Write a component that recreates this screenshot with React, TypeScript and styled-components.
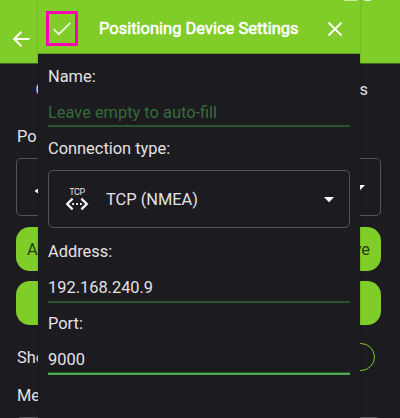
import React from "react";
import styled, { createGlobalStyle } from "styled-components";

const Global = createGlobalStyle`
  * { box-sizing: border-box; }
  html, body { margin: 0; background: #1c1b20; }
  body { font-family: Roboto, sans-serif; font-size: 16.4px; color: #e4e2e5; overflow: hidden; }
`;

const Screen = styled.div`
  position: relative;
  width: 400px;
  height: 418px;
  overflow: hidden;
  background: #1c1b20;
`;

const Page = styled.div`
  display: flex;
  flex-direction: column;
  height: 418px;
`;

const StatusIcons = styled.svg`
  position: absolute;
  left: 340px;
  top: 0;
`;

const AppBar = styled.header`
  flex: none;
  display: flex;
  align-items: center;
  height: 64px;
  padding: 14px 0 0 11px;
  background: #80cc28;
  border-bottom: 1px solid #41631f;
`;

const Tabs = styled.div`
  flex: none;
  display: flex;
  justify-content: space-between;
  align-items: center;
  height: 50px;
  padding: 0 32px 0 35.5px;
`;

const Content = styled.div`
  flex: none;
  display: flex;
  flex-direction: column;
  padding: 10px 19px 0 16px;
`;

const PageLabel = styled.div<{ $h: number }>`
  flex: none;
  height: ${(p) => p.$h}px;
  line-height: 26px;
  padding-left: 1px;
`;

const Outlined = styled.div`
  flex: none;
  display: flex;
  align-items: center;
  height: 58px;
  padding: 0 14px 0 17px;
  border: 1px solid #55545a;
  border-radius: 5px;
`;

const DialogSelect = styled(Outlined)`
  margin: 10px 0 11px;
  padding-left: 16px;
`;

const Spacer = styled.div`
  flex: 1;
`;

const Button = styled.div<{ $gap: number }>`
  flex: none;
  display: flex;
  align-items: center;
  justify-content: space-between;
  height: 44px;
  margin-top: ${(p) => p.$gap}px;
  padding: 1px 11px 0;
  border-radius: 14px;
  background: #80cc28;
  color: #2a3d18;
`;

const SwitchRow = styled.div`
  flex: none;
  display: flex;
  align-items: center;
  justify-content: space-between;
  height: 28px;
  margin: 18px 6px 12px 1px;
`;

const Switch = styled.div`
  width: 48px;
  height: 28px;
  border: 1px solid #7dc728;
  border-radius: 14px;
`;

const NextField = styled.div`
  flex: none;
  height: 10px;
  margin-top: 10px;
  border: 1px solid #55545a;
  border-radius: 5px 5px 0 0;
`;

const Dialog = styled.section`
  position: absolute;
  left: 38px;
  top: 0;
  width: 322px;
  height: 418px;
  display: flex;
  flex-direction: column;
  background: #1c1b20;
  box-shadow: 0 0 2px rgba(0, 0, 0, 0.25);
  clip-path: inset(0 -3px);
`;

const DialogHeader = styled.div`
  flex: none;
  display: flex;
  align-items: center;
  height: 54px;
  padding: 4px 16px 0 8px;
  background: #80cc28;
  border-bottom: 1px solid #659f27;
`;

const Confirm = styled.div`
  display: flex;
  align-items: center;
  justify-content: center;
  width: 32px;
  height: 35px;
  border: 3px solid #ff00b4;

  svg {
    flex: none;
  }
`;

const Title = styled.div`
  flex: 1;
  margin-left: 21px;
  letter-spacing: 0.04px;
  color: #fff;
  -webkit-text-stroke: 0.6px #fff;
  white-space: nowrap;
`;

const Form = styled.div`
  flex: 1;
  display: flex;
  flex-direction: column;
  padding: 10px 10px 0;
`;

const Label = styled.div`
  flex: none;
  height: 24px;
  line-height: 26px;
`;

const Field = styled.div<{ $active?: boolean; $hint?: boolean; $tall?: boolean }>`
  flex: none;
  height: ${(p) => (p.$active || p.$tall ? 30 : 29)}px;
  margin: 10px 0 ${(p) => (p.$tall ? 8 : 9)}px;
  line-height: 30px;
  color: ${(p) => (p.$hint ? "#356b39" : "#e4e2e5")};
  border-bottom: 2px solid ${(p) => (p.$active ? "#4ca950" : "#2b552f")};
  box-shadow: ${(p) => (p.$active ? "inset 0 -1px 0 #2b552f" : "none")};
`;

const SelectText = styled.span`
  margin-left: 17px;
  padding-top: 1px;
`;

const DeviceArrow = styled.svg`
  margin-top: 8px;
`;

const Caret = () => (
  <svg width="12" height="7" viewBox="0 0 12 7">
    <path d="M1 1H11L6 6.3Z" fill="#fff" />
  </svg>
);

const TcpMark = styled.div`
  display: flex;
  flex-direction: column;
  align-items: center;
  gap: 1px;
  width: 24px;
  font-size: 9px;
  letter-spacing: -0.5px;
  line-height: 8px;
  color: #e4e2e5;
`;

const Chevrons = () => (
  <svg width="24" height="14" viewBox="0 0 24 14" fill="none" stroke="#f4f3f4" strokeWidth="2.3">
    <path d="M7.6 1.6L2.2 7L7.6 12.4M16.4 1.6L21.8 7L16.4 12.4" />
    <path d="M7.2 7H9M11.1 7H12.9M15 7H16.8" strokeWidth="1.8" />
  </svg>
);

export default function App() {
  return (
    <>
      <Global />
      <Screen>
        <Page>
          <AppBar>
            <svg width="20" height="20" viewBox="0 0 20 20" fill="none" stroke="#fff" strokeWidth="2">
              <path d="M18.5 10H3.5M10.5 2.7L3.2 10L10.5 17.3" />
            </svg>
          </AppBar>
          <Tabs>
            <span>C</span>
            <span>s</span>
          </Tabs>
          <Content>
            <PageLabel $h={34}>Po</PageLabel>
            <Outlined>
              <DeviceArrow width="12" height="10" viewBox="0 0 12 10">
                <path d="M0.5 5L6 1V9Z" fill="#fff" />
              </DeviceArrow>
              <Spacer />
              <Caret />
            </Outlined>
            <Button $gap={11}>
              <span>A</span>
              <span>ve</span>
            </Button>
            <Button $gap={10} />
            <SwitchRow>
              <span>Sho</span>
              <Switch />
            </SwitchRow>
            <PageLabel $h={24}>Me</PageLabel>
            <NextField />
          </Content>
        </Page>
        <Dialog>
          <DialogHeader>
            <Confirm>
              <svg width="20" height="16" viewBox="0 0 20 16" fill="none" stroke="#ecf8df" strokeWidth="1.7">
                <path d="M1.7 8.2L6.8 13.2L18.3 1.8" />
              </svg>
            </Confirm>
            <Title>Positioning Device Settings</Title>
            <svg width="18" height="18" viewBox="0 0 18 18" fill="none" stroke="#fff" strokeWidth="1.8">
              <path d="M2.5 2.5L15.5 15.5M15.5 2.5L2.5 15.5" />
            </svg>
          </DialogHeader>
          <Form>
            <Label>Name:</Label>
            <Field $hint>Leave empty to auto-fill</Field>
            <Label>Connection type:</Label>
            <DialogSelect>
              <TcpMark>
                TCP
                <Chevrons />
              </TcpMark>
              <SelectText>TCP (NMEA)</SelectText>
              <Spacer />
              <Caret />
            </DialogSelect>
            <Label>Address:</Label>
            <Field $tall>192.168.240.9</Field>
            <Label>Port:</Label>
            <Field $active>9000</Field>
          </Form>
        </Dialog>
        <StatusIcons width="40" height="2" viewBox="0 0 40 2">
          <path d="M4 0H17V0.8H4ZM24 0H32L30 1H25Z" fill="#e6f3d6" />
        </StatusIcons>
      </Screen>
    </>
  );
}
